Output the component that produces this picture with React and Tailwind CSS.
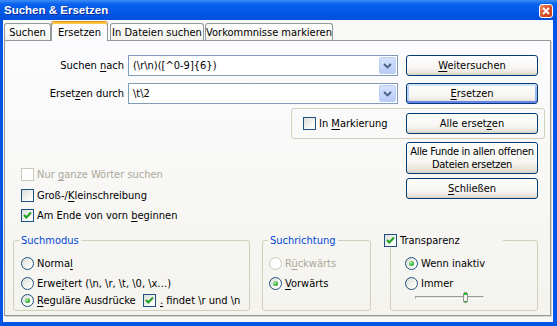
import React from 'react';

const U = ({ children }) => <span className="underline decoration-1 underline-offset-[2px]">{children}</span>;

const CheckBox = ({ checked = false, disabled = false }) => (
    <span
        className={`w-[13px] h-[13px] shrink-0 border flex items-center justify-center ${
            disabled ? 'border-[#cac8bb] bg-white' : 'border-[#1c5180] bg-[linear-gradient(135deg,#dcdcd7,#fdfdfc_80%)]'
        }`}
    >
        {checked && (
            <svg width="11" height="11" viewBox="0 0 11 11">
                <path d="M2 5 L4.3 7.5 L9 2.6" fill="none" stroke="#21a121" strokeWidth="2.1" />
            </svg>
        )}
    </span>
);

const Radio = ({ checked = false, disabled = false }) => (
    <span
        className={`w-[13px] h-[13px] shrink-0 rounded-full border flex items-center justify-center ${
            disabled ? 'border-[#cac8bb] bg-white' : 'border-[#1c5180] bg-[linear-gradient(135deg,#dcdcd7,#fdfdfc_80%)]'
        }`}
    >
        {checked && <span className="w-[5px] h-[5px] rounded-full bg-[radial-gradient(circle_at_35%_35%,#a6eea4,#21a121_75%)]" />}
    </span>
);

const Button = ({ children, focus = false, className = '' }) => (
    <div
        className={`w-[132px] shrink-0 border border-[#003c74] rounded-[3px] flex items-center justify-center text-center leading-[13px] whitespace-nowrap bg-[linear-gradient(to_bottom,#ffffff,#f6f5f1_65%,#e6e2d8_90%,#d6d0c5)] ${
            focus ? 'shadow-[inset_0_2px_0_#cee7ff,inset_0_-2px_0_#6982ee,inset_2px_0_0_#b9d1fa,inset_-2px_0_0_#9db9eb]' : ''
        } ${className}`}
    >
        {children}
    </div>
);

const Combo = ({ value, className = '' }) => (
    <div className={`w-[270px] h-[21px] border border-[#7f9db9] bg-white flex items-center ${className}`}>
        <span className="flex-1 pl-[4px] whitespace-pre">{value}</span>
        <span className="w-[17px] h-[17px] mr-px rounded-[2px] border border-[#bccff7] bg-[linear-gradient(to_bottom,#d6e3fd,#b7cbf7)] flex items-center justify-center">
            <svg width="9" height="6" viewBox="0 0 9 6">
                <path d="M1 1 L4.5 4.5 L8 1" fill="none" stroke="#4d6185" strokeWidth="1.8" />
            </svg>
        </span>
    </div>
);

const Tab = ({ label, active = false, className = '' }) =>
    active ? (
        <div
            className={`relative z-10 -mb-px h-[20px] flex items-center justify-center rounded-t-[3px] border-x border-t border-[#919b9c] border-t-[#e68b2c] bg-[#fcfcfe] shadow-[inset_0_2px_0_#ffc83c] pt-[1px] ${className}`}
        >
            {label}
        </div>
    ) : (
        <div
            className={`h-[17px] flex items-center justify-center rounded-t-[3px] border-x border-t border-[#919b9c] bg-[linear-gradient(to_bottom,#ffffff,#f3f2ec)] ${className}`}
        >
            {label}
        </div>
    );

const Row = ({ children, className = '' }) => <div className={`flex items-center gap-[3px] h-[13px] ${className}`}>{children}</div>;

const App = () => {
    return (
        <div className="w-[557px] h-[326px] flex flex-col bg-[#0055e5] text-[11px] leading-[13px] text-black font-['DejaVu_Sans_Condensed','Liberation_Sans',sans-serif] overflow-hidden">
            {/* title bar */}
            <div className="h-[20px] shrink-0 flex items-center pl-[4px] pr-[4px] bg-[linear-gradient(to_bottom,#3d8ef8,#0a62ee_20%,#0058e6_60%,#004fdc)]">
                <span className="font-['Liberation_Sans',sans-serif] font-bold text-[11.5px] text-white [text-shadow:1px_1px_0_#0b2a9c]">
                    Suchen &amp; Ersetzen
                </span>
                <span className="ml-auto mt-[1px] w-[14px] h-[14px] rounded-[3px] border border-white bg-[linear-gradient(135deg,#ec8a66,#d9532c_50%,#c23b16)] flex items-center justify-center">
                    <svg width="8" height="8" viewBox="0 0 8 8">
                        <path d="M1 1 L7 7 M7 1 L1 7" stroke="white" strokeWidth="1.8" />
                    </svg>
                </span>
            </div>

            {/* client area */}
            <div className="flex-1 ml-[3px] mr-[4px] mb-[4px] bg-[#f8f8f6] flex flex-col">
                <div className="flex items-end h-[20px]">
                    <Tab label="Suchen" className="ml-px w-[47px]" />
                    <Tab label="Ersetzen" active className="w-[57px]" />
                    <Tab label="In Dateien suchen" className="ml-[2px] w-[94px]" />
                    <Tab label="Vorkommnisse markieren" className="ml-px w-[128px]" />
                </div>

                <div className="ml-px w-[547px] h-[276px] border border-[#919b9c] bg-[linear-gradient(to_bottom,#fcfcfe,#f4f3ee)] shadow-[1px_1px_0_#d8d6cc] flex flex-col">
                    {/* Suchen nach */}
                    <div className="flex items-center mt-[14px]">
                        <span className="w-[123px] pr-[4px] text-right">
                            Suchen <U>n</U>ach
                        </span>
                        <Combo value={'(\\r\\n)([^0-9]{6})'} />
                        <Button className="ml-[8px] h-[21px]">
                            <span>
                                <U>W</U>eitersuchen
                            </span>
                        </Button>
                    </div>

                    {/* Ersetzen durch */}
                    <div className="flex items-center mt-[7px]">
                        <span className="w-[123px] pr-[4px] text-right">
                            Erset<U>z</U>en durch
                        </span>
                        <Combo value={'\\t\\2'} />
                        <Button focus className="ml-[8px] h-[21px]">
                            <span>
                                <U>E</U>rsetzen
                            </span>
                        </Button>
                    </div>

                    {/* In Markierung */}
                    <div className="ml-[286px] mt-[4px] w-[254px] h-[31px] border border-[#d0d0bf] rounded-[3px] flex items-start">
                        <Row className="ml-[11px] mt-[8px]">
                            <CheckBox />
                            <span>
                                In <U>M</U>arkierung
                            </span>
                        </Row>
                        <Button className="ml-auto mr-[6px] mt-[4px] h-[21px]">
                            <span>
                                Alle erset<U>z</U>en
                            </span>
                        </Button>
                    </div>

                    {/* options + buttons */}
                    <div className="flex items-start">
                        <div className="ml-[16px] flex flex-col">
                            <Row className="mt-[29px] text-[#aca899]">
                                <CheckBox disabled />
                                <span>
                                    Nur <U>g</U>anze Wörter suchen
                                </span>
                            </Row>
                            <Row className="mt-[8px]">
                                <CheckBox />
                                <span>
                                    Groß-/<U>K</U>leinschreibung
                                </span>
                            </Row>
                            <Row className="mt-[7px]">
                                <CheckBox checked />
                                <span>
                                    Am Ende von vorn <U>b</U>eginnen
                                </span>
                            </Row>
                        </div>
                        <div className="ml-auto mr-[12px] flex flex-col">
                            <Button className="mt-[3px] h-[32px] tracking-[-0.3px]">
                                Alle Funde in allen offenen
                                <br />
                                Dateien ersetzen
                            </Button>
                            <Button className="mt-[4px] h-[21px]">
                                <span>
                                    <U>S</U>chließen
                                </span>
                            </Button>
                        </div>
                    </div>

                    {/* group boxes */}
                    <div className="flex items-start mt-[12px]">
                        <fieldset className="ml-[8px] w-[237px] h-[77px] border border-[#d0d0bf] rounded-[3px]">
                            <legend className="ml-[5px] px-[2px] leading-[13px] text-[#0046d5]">Suchmodus</legend>
                            <Row className="ml-[7px] mt-[10px]">
                                <Radio />
                                <span>
                                    Norma<U>l</U>
                                </span>
                            </Row>
                            <Row className="ml-[7px] mt-[7px]">
                                <Radio />
                                <span>
                                    Erwe<U>i</U>tert (\n, \r, \t, \0, \x…)
                                </span>
                            </Row>
                            <Row className="ml-[7px] mt-[4px]">
                                <Radio checked />
                                <span className="w-[103px]">
                                    <U>R</U>eguläre Ausdrücke
                                </span>
                                <CheckBox checked />
                                <span className="ml-px">
                                    <U>.</U> findet \r und \n
                                </span>
                            </Row>
                        </fieldset>

                        <fieldset className="ml-[12px] w-[109px] h-[77px] border border-[#d0d0bf] rounded-[3px]">
                            <legend className="ml-[5px] px-[2px] leading-[13px] text-[#0046d5]">Suchrichtung</legend>
                            <Row className="ml-[6px] mt-[10px] text-[#aca899]">
                                <Radio disabled />
                                <span>
                                    R<U>ü</U>ckwärts
                                </span>
                            </Row>
                            <Row className="ml-[6px] mt-[7px]">
                                <Radio checked />
                                <span>
                                    <U>V</U>orwärts
                                </span>
                            </Row>
                        </fieldset>

                        <fieldset className="ml-[19px] w-[148px] h-[77px] border border-[#d0d0bf] rounded-[3px]">
                            <legend className="relative -left-[7px] w-[112px] leading-[13px]">
                                <span className="flex items-center gap-[3px]">
                                    <CheckBox checked />
                                    <span>Transparenz</span>
                                </span>
                            </legend>
                            <Row className="ml-[14px] mt-[10px]">
                                <Radio checked />
                                <span>Wenn inaktiv</span>
                            </Row>
                            <Row className="ml-[14px] mt-[7px]">
                                <Radio />
                                <span>Immer</span>
                            </Row>
                            <div className="relative ml-[24px] mt-[2px] w-[69px] h-[11px]">
                                <div className="absolute left-0 right-0 top-[4px] h-[3px] rounded-[1px] border border-[#9d9c99] border-b-white border-r-white bg-[#e6e5df]" />
                                <div className="absolute left-[48px] top-0 w-[5px] h-[11px] rounded-[2px] border border-[#8a9a8a] bg-[linear-gradient(to_bottom,#21c121_0,#21c121_2px,#f4f3ee_2px,#f4f3ee_8px,#21a121_8px)]" />
                            </div>
                        </fieldset>
                    </div>
                </div>
            </div>
        </div>
    );
};

export default App;
